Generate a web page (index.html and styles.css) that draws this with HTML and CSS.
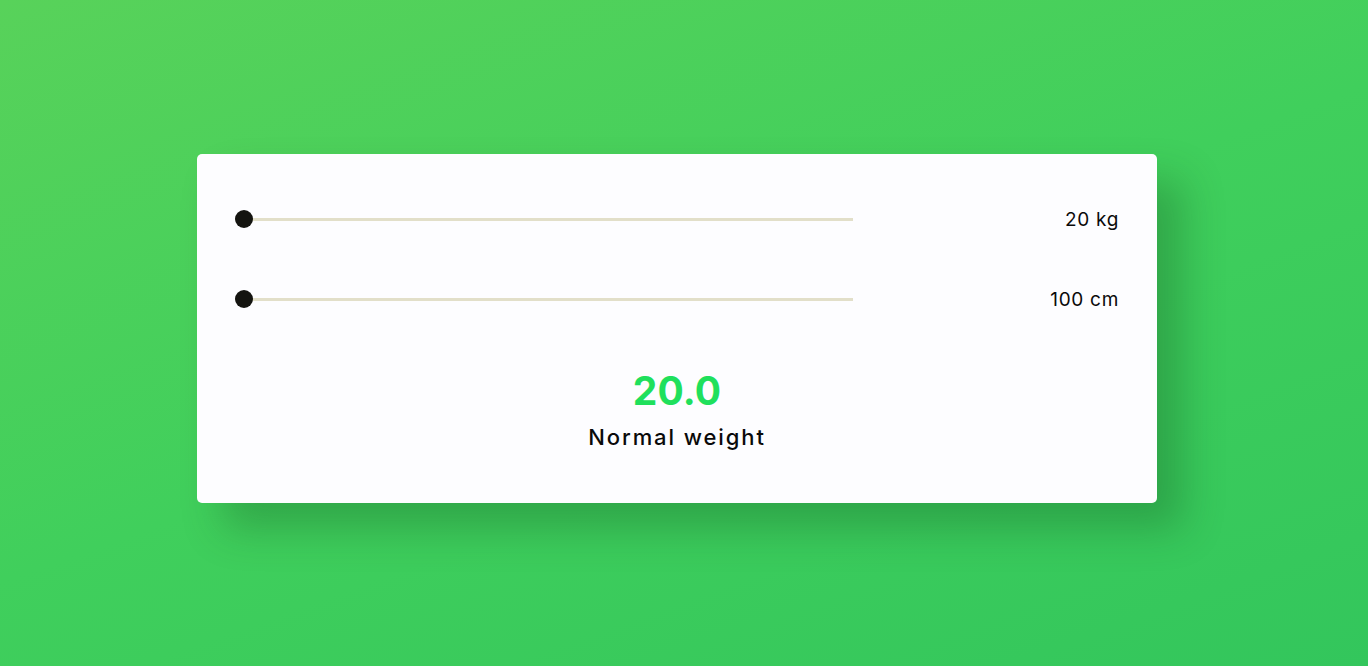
FILE: index.html
```html
<!DOCTYPE html>
<html>
<head>
<meta charset="utf-8">
<link rel="stylesheet" href="styles.css">
</head>
<body>
<main class="stage">
  <section class="card">
    <div class="row">
      <div class="slider"><div class="track"></div><div class="thumb"></div></div>
      <span class="value">20 kg</span>
    </div>
    <div class="row row-second">
      <div class="slider"><div class="track"></div><div class="thumb"></div></div>
      <span class="value">100 cm</span>
    </div>
    <div class="result">
      <div class="bmi">20.0</div>
      <div class="label">Normal weight</div>
    </div>
  </section>
</main>
</body>
</html>
```
FILE: styles.css
```css
html, body {
  margin: 0;
  padding: 0;
  height: 100%;
}
body {
  background: linear-gradient(160deg, #58d25a 0%, #40cf5c 50%, #33c65c 100%);
  font-family: "Inter", "Open Sans", sans-serif;
  color: #111;
}
.stage {
  height: 666px;
  display: flex;
  justify-content: flex-start;
  padding: 154px 0 0 197px;
  box-sizing: border-box;
}
.card {
  width: 960px;
  height: 349px;
  box-sizing: border-box;
  background: #fdfdff;
  border-radius: 5px;
  padding: 40px 38px 0 38px;
  box-shadow: 26px 26px 40px rgba(20, 80, 30, 0.3);
}
.row {
  height: 50px;
  display: flex;
  align-items: center;
  justify-content: space-between;
}
.row-second {
  margin-top: 30px;
}
.slider {
  position: relative;
  width: 618px;
  height: 18px;
  display: flex;
  align-items: center;
}
.track {
  width: 100%;
  height: 3px;
  background: #e2dfc9;
}
.thumb {
  position: absolute;
  left: 0;
  top: 0;
  width: 18px;
  height: 18px;
  border-radius: 50%;
  background: #141410;
}
.value {
  font-size: 19px;
  font-weight: 400;
  letter-spacing: 0.7px;
  color: #0a0a0a;
}
.result {
  margin-top: 45px;
  display: flex;
  flex-direction: column;
  align-items: center;
}
.bmi {
  height: 44px;
  line-height: 44px;
  font-size: 39px;
  font-weight: 700;
  color: #1fe05c;
  letter-spacing: 0.2px;
}
.label {
  margin-top: 10px;
  height: 28px;
  line-height: 28px;
  font-size: 22px;
  font-weight: 500;
  letter-spacing: 1.9px;
  color: #0a0a0a;
}
```
